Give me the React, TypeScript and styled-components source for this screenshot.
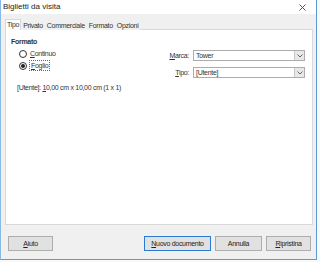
import React from 'react';
import styled, { createGlobalStyle } from 'styled-components';

const GlobalStyle = createGlobalStyle`
  *, *::before, *::after {
    box-sizing: border-box;
  }
  html, body {
    margin: 0;
    padding: 0;
    background: #f7f9fb;
  }
  body {
    font-family: 'Liberation Sans', Arial, sans-serif;
    font-size: 7px;
    letter-spacing: -0.3px;
    color: #333;
  }
`;

const TABS = ['Tipo', 'Privato', 'Commerciale', 'Formato', 'Opzioni'];

const Mn = ({ children }: { children: string }) => <U>{children}</U>;

const ChevronDown = () => (
  <svg width="6" height="4" viewBox="0 0 6 4">
    <path d="M0.5 0.5L3 3L5.5 0.5" stroke="#666" fill="none" />
  </svg>
);

export default function App() {
  return (
    <>
      <GlobalStyle />
      <Window>
        <TitleBar>
          <Title>Biglietti da visita</Title>
          <Close>
            <svg width="7" height="7" viewBox="0 0 7 7">
              <path d="M0.5 0.5L6.5 6.5M6.5 0.5L0.5 6.5" stroke="#555" strokeWidth="1" />
            </svg>
          </Close>
        </TitleBar>
        <Body>
          <TabRow>
            {TABS.map((t, i) => (
              <Tab key={t} active={i === 0}>
                {t}
              </Tab>
            ))}
          </TabRow>
          <Panel>
            <Section>Formato</Section>
            <Columns>
              <LeftCol>
                <RadioRow>
                  <Radio />
                  <span>
                    <Mn>C</Mn>ontinuo
                  </span>
                </RadioRow>
                <RadioRow>
                  <Radio checked />
                  <Focus>
                    <Mn>F</Mn>oglio
                  </Focus>
                </RadioRow>
                <Info>
                  [Utente]: <Mn>1</Mn>0,00 cm x 10,00 cm (1 x 1)
                </Info>
              </LeftCol>
              <RightCol>
                <FieldRow>
                  <FieldLabel>
                    <Mn>M</Mn>arca:
                  </FieldLabel>
                  <Select>
                    <SelectText>Tower</SelectText>
                    <Arrow>
                      <ChevronDown />
                    </Arrow>
                  </Select>
                </FieldRow>
                <FieldRow>
                  <FieldLabel>
                    <Mn>T</Mn>ipo:
                  </FieldLabel>
                  <Select>
                    <SelectText>[Utente]</SelectText>
                    <Arrow>
                      <ChevronDown />
                    </Arrow>
                  </Select>
                </FieldRow>
              </RightCol>
            </Columns>
          </Panel>
          <Footer>
            <Button width={45}>
              <Mn>A</Mn>iuto
            </Button>
            <Spacer />
            <Button width={67} primary>
              <Mn>N</Mn>uovo documento
            </Button>
            <Button width={47}>Annulla</Button>
            <Button width={45}>
              <Mn>R</Mn>ipristina
            </Button>
          </Footer>
        </Body>
      </Window>
    </>
  );
}

const Window = styled.div`
  width: 317px;
  height: 260px;
  display: flex;
  flex-direction: column;
  border-left: 1px solid #8ab8e4;
  border-right: 1px solid #5a9ad8;
  border-bottom: 1px solid #5a9ad8;
  background: #f0f0f0;
`;
const TitleBar = styled.div`
  height: 14px;
  background: #fff;
  display: flex;
  align-items: center;
  padding: 0 0 0 2px;
`;
const Title = styled.div`
  flex: 1;
  font-size: 8px;
  letter-spacing: 0;
  color: #222;
  line-height: 14px;
`;
const Close = styled.div`
  width: 10px;
  margin-right: 9px;
  display: flex;
  align-items: center;
  justify-content: center;
`;
const Body = styled.div`
  flex: 1;
  display: flex;
  flex-direction: column;
  padding: 0 3px 0 4px;
`;
const TabRow = styled.div`
  display: flex;
  margin-top: 5px;
  height: 11px;
`;
const Tab = styled.div<{ active?: boolean }>`
  padding: 0 1px;
  line-height: 10px;
  background: ${(p) => (p.active ? '#fff' : '#f0f0f0')};
  border: 1px solid ${(p) => (p.active ? '#d9d9d9' : 'transparent')};
  border-bottom: none;
  position: relative;
  z-index: ${(p) => (p.active ? 1 : 0)};
  height: ${(p) => (p.active ? '11px' : '10px')};
  margin-top: ${(p) => (p.active ? '0' : '1px')};
`;
const Panel = styled.div`
  height: 196px;
  background: #fff;
  border: 1px solid #d9d9d9;
  margin-top: -1px;
  padding: 7px 5px 0 5px;
  display: flex;
  flex-direction: column;
`;
const Section = styled.div`
  font-weight: 700;
  line-height: 9px;
`;
const Columns = styled.div`
  display: flex;
`;
const LeftCol = styled.div`
  width: 151px;
  padding: 2px 0 0 8px;
  display: flex;
  flex-direction: column;
`;
const RightCol = styled.div`
  flex: 1;
  padding: 4px 2px 0 0;
  display: flex;
  flex-direction: column;
  gap: 6px;
`;
const RadioRow = styled.div`
  display: flex;
  align-items: center;
  gap: 3px;
  height: 11px;
  margin-bottom: 1px;
`;
const Radio = styled.span<{ checked?: boolean }>`
  width: 8px;
  height: 8px;
  border: 1px solid #333;
  border-radius: 50%;
  background: #fff;
  display: flex;
  align-items: center;
  justify-content: center;
  &::after {
    content: '';
    width: 4px;
    height: 4px;
    border-radius: 50%;
    background: ${(p) => (p.checked ? '#222' : 'transparent')};
  }
`;
const Focus = styled.span`
  outline: 1px dotted #666;
  padding: 0 1px;
  line-height: 9px;
`;
const U = styled.span`
  text-decoration: underline;
`;
const Info = styled.div`
  margin-top: 11px;
  margin-left: -2px;
  line-height: 9px;
`;
const FieldRow = styled.div`
  display: flex;
  align-items: center;
`;
const FieldLabel = styled.div`
  width: 27px;
  text-align: right;
  margin-right: 4px;
`;
const Select = styled.div`
  flex: 1;
  height: 11px;
  border: 1px solid #acacac;
  display: flex;
  align-items: center;
  background: #fff;
`;
const SelectText = styled.div`
  flex: 1;
  padding-left: 2px;
  line-height: 9px;
`;
const Arrow = styled.div`
  width: 10px;
  height: 9px;
  background: #e8e8e8;
  border-left: 1px solid #c8c8c8;
  display: flex;
  align-items: center;
  justify-content: center;
`;
const Footer = styled.div`
  display: flex;
  align-items: center;
  gap: 4px;
  padding: 11px 2px 0 3px;
`;
const Spacer = styled.div`
  flex: 1;
`;
const Button = styled.div<{ width: number; primary?: boolean }>`
  width: ${(p) => p.width}px;
  height: 15px;
  border: 1px solid ${(p) => (p.primary ? '#2a7ad5' : '#adadad')};
  background: #e1e1e1;
  display: flex;
  align-items: center;
  justify-content: center;
  white-space: nowrap;
  color: #222;
`;
